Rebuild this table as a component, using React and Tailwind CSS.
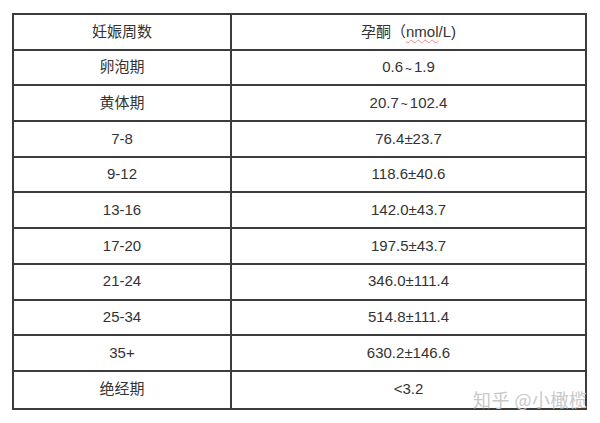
import React from "react";

const rows = [
  ["卵泡期", "0.6 ~ 1.9"],
  ["黄体期", "20.7 ~ 102.4"],
  ["7-8", "76.4±23.7"],
  ["9-12", "118.6±40.6"],
  ["13-16", "142.0±43.7"],
  ["17-20", "197.5±43.7"],
  ["21-24", "346.0±111.4"],
  ["25-34", "514.8±111.4"],
  ["35+", "630.2±146.6"],
  ["绝经期", "<3.2"],
];

function Tilde({ text }) {
  const parts = text.split(" ~ ");
  if (parts.length === 1) return text;
  return (
    <>
      {parts[0]}
      <span className="text-[12px] mx-[2px] relative top-[1px]">~</span>
      {parts[1]}
    </>
  );
}

export default function App() {
  return (
    <div
      className="relative w-[600px] h-[423px] bg-white pt-[13px] pl-[12px]"
      style={{ fontFamily: '"Liberation Sans", Arial, "Noto Sans CJK SC", sans-serif' }}
    >
      <div className="w-[575px] border-2 border-[#3c3c3c] text-[#333] text-[15px]">
        <div className="flex h-[35.7px] border-b-2 border-[#3c3c3c]">
          <div className="w-[218px] border-r-2 border-[#3c3c3c] flex items-center justify-center">
            妊娠周数
          </div>
          <div className="flex-1 flex items-center justify-center">
            孕酮（<span className="underline decoration-wavy decoration-[#e88] decoration-1 underline-offset-2">nmol</span>/L)
          </div>
        </div>
        {rows.map(([a, b], i) => (
          <div
            key={i}
            className={
              i === rows.length - 1
                ? "flex h-[35.7px]"
                : "flex h-[35.7px] border-b-2 border-[#3c3c3c]"
            }
          >
            <div className="w-[218px] border-r-2 border-[#3c3c3c] flex items-center justify-center">
              {a}
            </div>
            <div className="flex-1 flex items-center justify-center">
              <Tilde text={b} />
            </div>
          </div>
        ))}
      </div>
      <div
        className="absolute left-[473px] top-[388px] text-[18px] leading-[22px] text-[#c9c9c9] tracking-[0.5px]"
        style={{ fontFamily: '"Noto Sans CJK SC", sans-serif' }}
      >
        知乎 @小橄榄
      </div>
    </div>
  );
}
